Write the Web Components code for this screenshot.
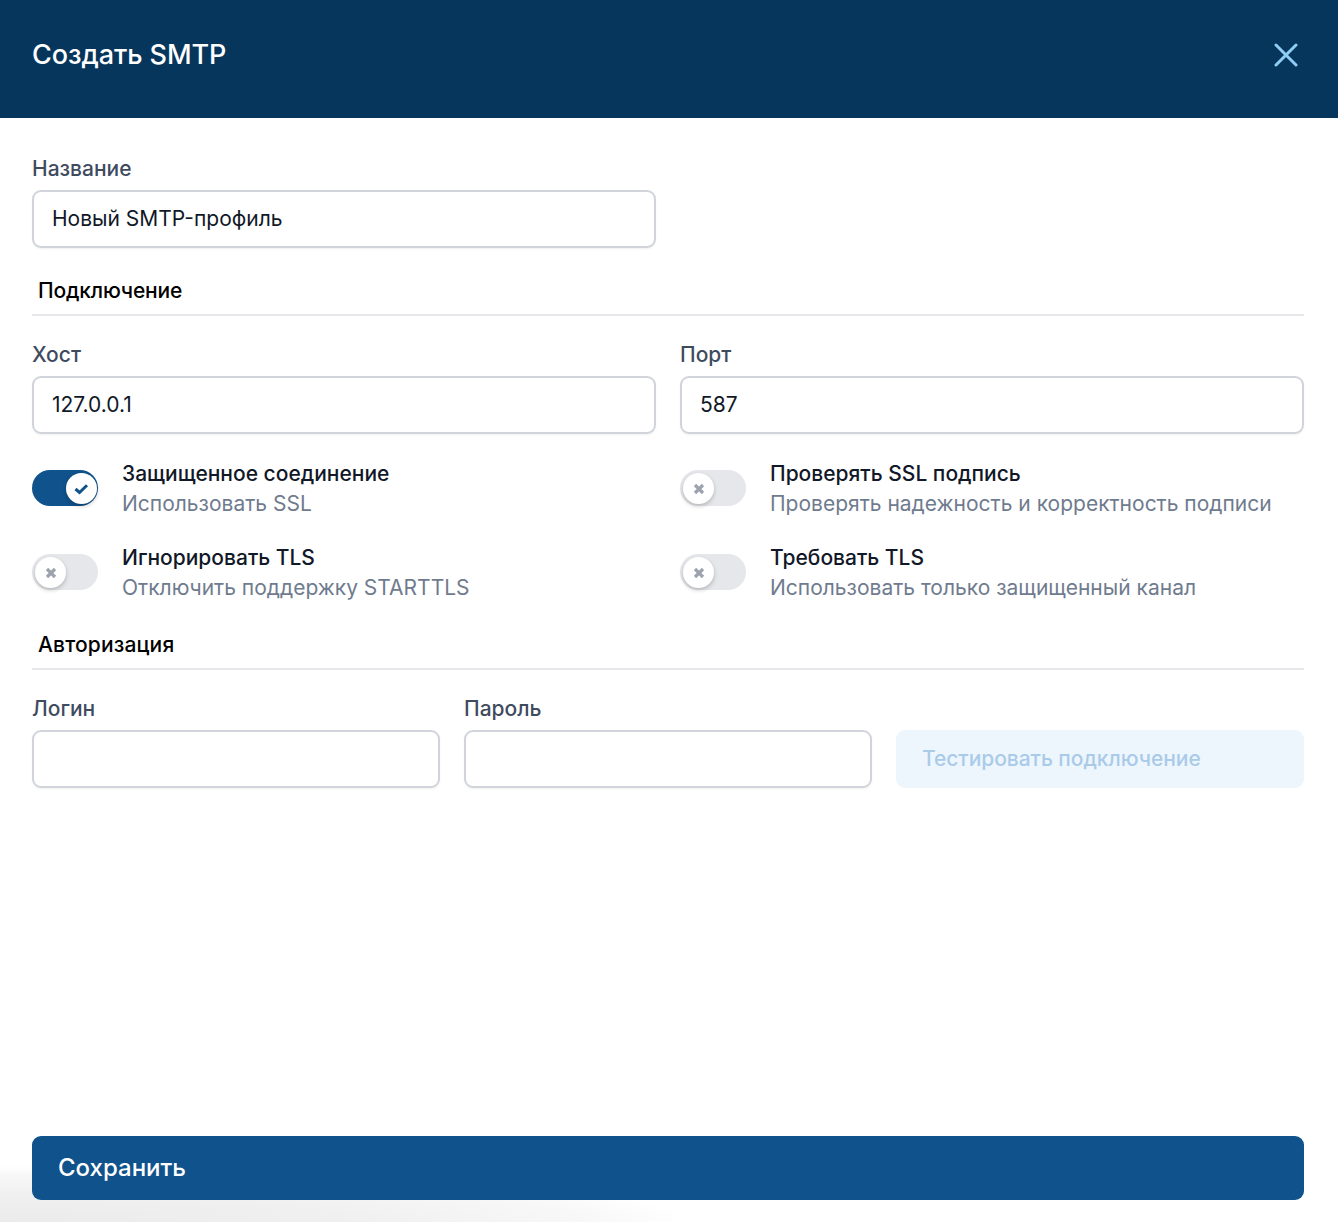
<!DOCTYPE html>
<html lang="ru"><head><meta charset="utf-8"><title>Создать SMTP</title>
<style>
html,body{margin:0;padding:0;background:#fff}
body{font-family:Inter,"Liberation Sans",sans-serif;width:1338px;height:1222px;overflow:hidden}
</style></head><body>
<smtp-dialog></smtp-dialog>
<template id="t-dialog"><style>
:host{display:flex;flex-direction:column;width:1338px;height:1222px;box-sizing:border-box;position:relative;background:#fff}
.shade{position:absolute;left:0;right:0;bottom:0;height:60px;pointer-events:none;
 background:radial-gradient(ellipse 690px 56px at 0 100%,#ebebeb 0%,#f0f0f0 50%,#f8f8f8 85%,#fff 100%)}
header{height:118px;flex:none;background:#07365c;display:flex;align-items:flex-start;justify-content:space-between;padding:0 40px 0 32px;box-sizing:border-box}
h1{margin:38px 0 0;font-size:27px;line-height:34px;font-weight:500;color:#fff;letter-spacing:-.08px}
svg{display:block}
main{flex:1;padding:0 34px 0 32px;display:flex;flex-direction:column;position:relative;z-index:1}
.top{margin-top:37px;width:624px}
.two{display:grid;grid-template-columns:624px 624px;column-gap:24px;margin-top:25px}
.three{display:grid;grid-template-columns:408px 408px 408px;column-gap:24px;align-items:end;margin-top:25px}
.toggles{display:grid;grid-template-columns:624px 624px;column-gap:24px;row-gap:24px;margin-top:25px}
footer{margin-top:auto;margin-bottom:22px;position:relative}
</style>
<header><h1>Создать SMTP</h1>
<svg width="24" height="24" viewBox="0 0 24 24" style="margin-top:43px" aria-hidden="true"><path d="M2 2L22 22M22 2L2 22" stroke="#90cdf4" stroke-width="3" fill="none" stroke-linecap="round"/></svg></header>
<div class="shade"></div>
<main>
<div class="top"><text-field label="Название" value="Новый SMTP-профиль"></text-field></div>
<section-head style="letter-spacing:-.17px">Подключение</section-head>
<div class="two"><text-field label="Хост" value="127.0.0.1"></text-field><text-field label="Порт" value="587"></text-field></div>
<div class="toggles">
<switch-row on title="Защищенное соединение" sub="Использовать SSL"></switch-row>
<switch-row title="Проверять SSL подпись" sub="Проверять надежность и корректность подписи"></switch-row>
<switch-row title="Игнорировать TLS" sub="Отключить поддержку STARTTLS"></switch-row>
<switch-row title="Требовать TLS" sub="Использовать только защищенный канал"></switch-row>
</div>
<section-head style="letter-spacing:.15px;margin-top:28px">Авторизация</section-head>
<div class="three"><text-field label="Логин"></text-field><text-field label="Пароль"></text-field><ghost-button>Тестировать подключение</ghost-button></div>
<footer><save-button>Сохранить</save-button></footer>
</main></template>
<template id="t-field"><style>
:host{display:block}
label{display:block;font-size:21px;line-height:28px;font-weight:500;color:#3f4b5f;height:26px}
.box{margin-top:9px;height:58px;box-sizing:border-box;border:2px solid #d1d5db;border-radius:9px;padding:0 18px 1px;display:flex;align-items:center;font-size:21px;color:#111827;background:#fff;box-shadow:0 1px 2px rgba(0,0,0,.06)}
</style><label></label><div class="box"></div></template>
<template id="t-head"><style>
:host{display:block;margin-top:29px;height:37px;border-bottom:2px solid #e5e7eb}
div{padding-left:6px;font-size:21px;line-height:28px;font-weight:500;color:#000}
</style><div><slot></slot></div></template>
<template id="t-switch"><style>
:host{display:flex;column-gap:24px;align-items:flex-start;height:60px}
.track{width:66px;height:36px;margin-top:11px;border-radius:18px;background:#e5e7eb;position:relative;flex:none}
:host([on]) .track{background:#0f528c}
.knob{position:absolute;top:3px;left:3px;width:31px;height:31px;border-radius:50%;background:#fff;box-shadow:0 2px 4px rgba(0,0,0,.22);display:flex;align-items:center;justify-content:center}
:host([on]) .knob{left:34px}
b{display:block;font-size:21px;line-height:30px;font-weight:500;color:#111827}
span{display:block;font-size:21px;line-height:30px;color:#6f7b8e}
svg{display:block}
</style><div class="track"><div class="knob"></div></div><div><b></b><span></span></div></template>
<template id="t-ghost"><style>
:host{display:flex;align-items:center;height:58px;border-radius:9px;background:#eef6fd;color:#a9cbe9;font-size:21px;font-weight:500;padding:0 26px 2px;box-sizing:border-box;letter-spacing:-.05px}
</style><slot></slot></template>
<template id="t-save"><style>
:host{display:flex;align-items:center;height:64px;border-radius:9px;background:#0f528c;color:#fff;font-size:24px;font-weight:500;padding:0 26px 1px;box-sizing:border-box}
</style><slot></slot></template>
<script>
function mount(el,id){const r=el.attachShadow({mode:'open'});r.appendChild(document.getElementById(id).content.cloneNode(true));return r}
customElements.define('text-field',class extends HTMLElement{connectedCallback(){const r=mount(this,'t-field');r.querySelector('label').textContent=this.getAttribute('label');r.querySelector('.box').textContent=this.getAttribute('value')||''}});
customElements.define('section-head',class extends HTMLElement{connectedCallback(){mount(this,'t-head')}});
customElements.define('switch-row',class extends HTMLElement{connectedCallback(){const r=mount(this,'t-switch');r.querySelector('b').textContent=this.getAttribute('title');r.querySelector('span').textContent=this.getAttribute('sub');
r.querySelector('.knob').innerHTML=this.hasAttribute('on')?'<svg width="15" height="15" viewBox="0 0 15 15"><path d="M1.5 8L5.5 11.5L13 4.2" fill="none" stroke="#0f528c" stroke-width="3"/></svg>':'<svg width="12" height="12" viewBox="0 0 12 12"><path d="M2 2L10 10M10 2L2 10" fill="none" stroke="#9ca3af" stroke-width="3.2"/></svg>'}});
customElements.define('ghost-button',class extends HTMLElement{connectedCallback(){mount(this,'t-ghost')}});
customElements.define('save-button',class extends HTMLElement{connectedCallback(){mount(this,'t-save')}});
customElements.define('smtp-dialog',class extends HTMLElement{connectedCallback(){mount(this,'t-dialog')}});
</script></body></html>
